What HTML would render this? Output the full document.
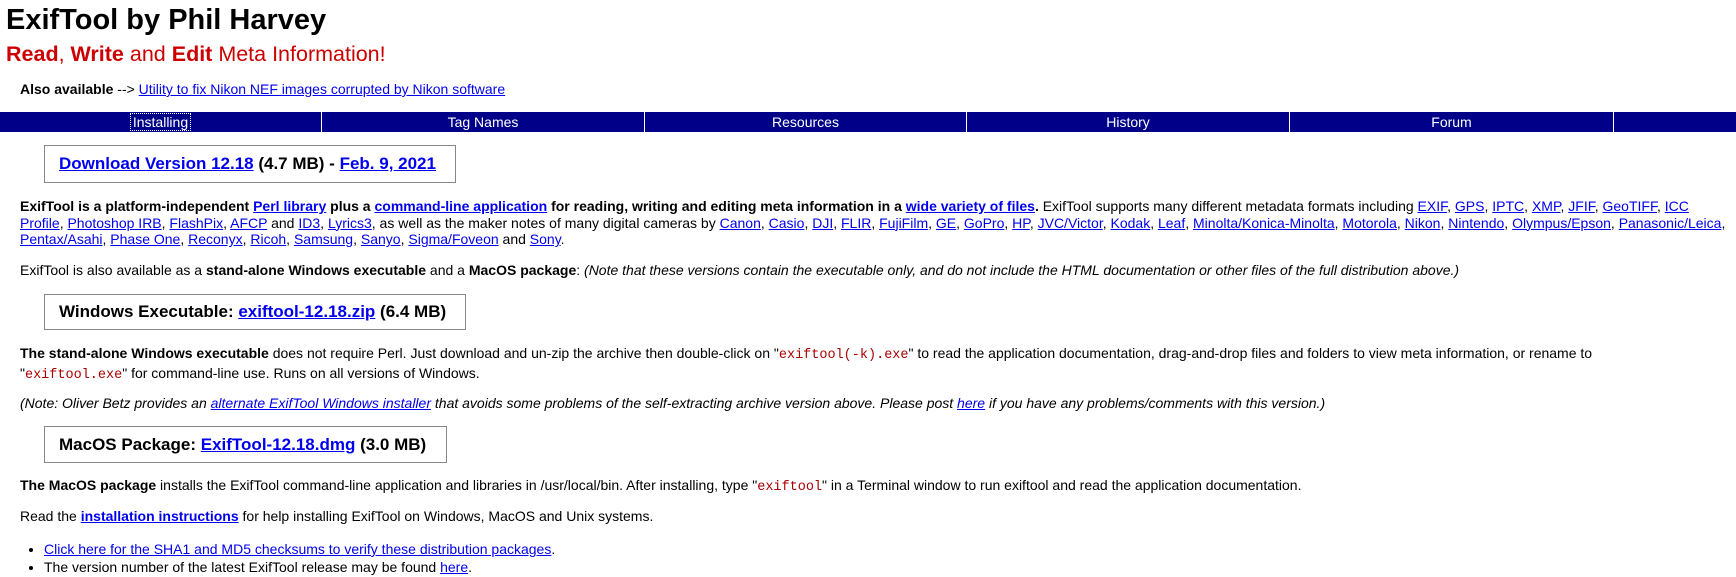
<!DOCTYPE html>
<html><head><meta charset="utf-8"><style>
body{margin:0;width:1736px;height:577px;overflow:hidden;background:#fff;font-family:"Liberation Sans",Arial,sans-serif;font-size:14px;color:#000;position:relative}
a{color:#00e;text-decoration:underline}
.a{position:absolute;left:20px;right:2px;line-height:16.6px;margin:0}
.box{position:absolute;left:44px;border:1px solid #888;font-weight:bold;font-size:17px;box-sizing:border-box;padding:0 14px;display:flex;align-items:center}
.box a{font-weight:bold}
.nav{position:absolute;left:0;top:112px;width:1736px;height:20px;background:#008}
.nav div{position:absolute;top:0;height:20px;line-height:20px;color:#fff;text-align:center;border-right:1px solid #fff;box-sizing:border-box}
code{font-family:"Liberation Mono",monospace;color:#a00;font-size:13.5px}
b{font-weight:bold}
</style></head><body>
<div style="position:absolute;left:6px;top:1px;font-size:29px;font-weight:bold;line-height:38px">ExifTool by Phil Harvey</div>
<div style="position:absolute;left:6px;top:40px;font-size:21.5px;line-height:28px;color:#c00"><b>Read</b>, <b>Write</b> and <b>Edit</b> Meta Information!</div>
<div class="a" style="top:81px"><b>Also available</b> --&gt; <a href="#">Utility to fix Nikon NEF images corrupted by Nikon software</a></div>
<div class="nav">
<div style="left:0;width:322px"><span style="outline:1px dotted #fff;padding:0 2px">Installing</span></div>
<div style="left:322px;width:323px">Tag Names</div>
<div style="left:645px;width:322px">Resources</div>
<div style="left:967px;width:323px">History</div>
<div style="left:1290px;width:324px">Forum</div>
</div>
<div class="box" style="top:145px;width:412px;height:38px"><span><a href="#">Download Version 12.18</a> (4.7 MB) - <a href="#">Feb. 9, 2021</a></span></div>
<div class="a" style="top:198px"><b>ExifTool is a platform-independent <a href="#">Perl library</a> plus a <a href="#">command-line application</a> for reading, writing and editing meta information in a <a href="#">wide variety of files</a>.</b> ExifTool supports many different metadata formats including <a href="#">EXIF</a>, <a href="#">GPS</a>, <a href="#">IPTC</a>, <a href="#">XMP</a>, <a href="#">JFIF</a>, <a href="#">GeoTIFF</a>, <a href="#">ICC Profile</a>, <a href="#">Photoshop IRB</a>, <a href="#">FlashPix</a>, <a href="#">AFCP</a> and <a href="#">ID3</a>, <a href="#">Lyrics3</a>, as well as the maker notes of many digital cameras by <a href="#">Canon</a>, <a href="#">Casio</a>, <a href="#">DJI</a>, <a href="#">FLIR</a>, <a href="#">FujiFilm</a>, <a href="#">GE</a>, <a href="#">GoPro</a>, <a href="#">HP</a>, <a href="#">JVC/Victor</a>, <a href="#">Kodak</a>, <a href="#">Leaf</a>, <a href="#">Minolta/Konica-Minolta</a>, <a href="#">Motorola</a>, <a href="#">Nikon</a>, <a href="#">Nintendo</a>, <a href="#">Olympus/Epson</a>, <a href="#">Panasonic/Leica</a>, <a href="#">Pentax/Asahi</a>, <a href="#">Phase One</a>, <a href="#">Reconyx</a>, <a href="#">Ricoh</a>, <a href="#">Samsung</a>, <a href="#">Sanyo</a>, <a href="#">Sigma/Foveon</a> and <a href="#">Sony</a>.</div>
<div class="a" style="top:262px">ExifTool is also available as a <b>stand-alone Windows executable</b> and a <b>MacOS package</b>: <i>(Note that these versions contain the executable only, and do not include the HTML documentation or other files of the full distribution above.)</i></div>
<div class="box" style="top:294px;width:422px;height:36px"><span>Windows Executable: <a href="#">exiftool-12.18.zip</a> (6.4 MB)</span></div>
<div class="a" style="top:345px"><b>The stand-alone Windows executable</b> does not require Perl. Just download and un-zip the archive then double-click on "<code>exiftool(-k).exe</code>" to read the application documentation, drag-and-drop files and folders to view meta information, or rename to<br>"<code>exiftool.exe</code>" for command-line use. Runs on all versions of Windows.</div>
<div class="a" style="top:395px"><i>(Note: Oliver Betz provides an <a href="#">alternate ExifTool Windows installer</a> that avoids some problems of the self-extracting archive version above. Please post <a href="#">here</a> if you have any problems/comments with this version.)</i></div>
<div class="box" style="top:426px;width:403px;height:37px"><span>MacOS Package: <a href="#">ExifTool-12.18.dmg</a> (3.0 MB)</span></div>
<div class="a" style="top:477px"><b>The MacOS package</b> installs the ExifTool command-line application and libraries in /usr/local/bin. After installing, type "<code>exiftool</code>" in a Terminal window to run exiftool and read the application documentation.</div>
<div class="a" style="top:508px">Read the <a href="#"><b>installation instructions</b></a> for help installing ExifTool on Windows, MacOS and Unix systems.</div>
<ul style="position:absolute;left:0;top:541px;margin:0;padding-left:44px;line-height:17.5px">
<li><a href="#">Click here for the SHA1 and MD5 checksums to verify these distribution packages</a>.</li>
<li>The version number of the latest ExifTool release may be found <a href="#">here</a>.</li>
</ul>
</body></html>
